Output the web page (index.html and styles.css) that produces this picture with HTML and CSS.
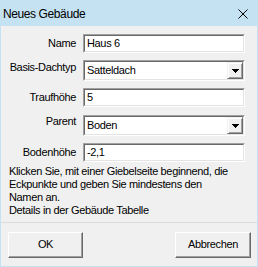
FILE: index.html
```html
<!DOCTYPE html>
<html lang="de">
<head>
<meta charset="utf-8">
<title>Neues Gebäude</title>
<link rel="stylesheet" href="styles.css">
</head>
<body>
<div class="window">
  <div class="titlebar">
    <span class="title">Neues Gebäude</span>
    <svg class="close" width="10" height="10" viewBox="0 0 10 10" aria-hidden="true">
      <path d="M0.5 0.5 L9.5 9.5 M9.5 0.5 L0.5 9.5" stroke="#000" stroke-width="1" fill="none"/>
    </svg>
  </div>
  <div class="content">
    <div class="form">
      <span class="lbl">Name</span>
      <div class="edit"><div class="inner">Haus 6</div></div>

      <span class="lbl lbl-combo">Basis-Dachtyp</span>
      <div class="combo"><div class="inner"><span class="val">Satteldach</span><span class="dd"><svg width="7" height="4" viewBox="0 0 7 4"><path d="M0 0h7v1H0z M1 1h5v1H1z M2 2h3v1H2z M3 3h1v1H3z" fill="#000"/></svg></span></div></div>

      <span class="lbl">Traufhöhe</span>
      <div class="edit"><div class="inner">5</div></div>

      <span class="lbl lbl-combo">Parent</span>
      <div class="combo combo-parent"><div class="inner"><span class="val">Boden</span><span class="dd"><svg width="7" height="4" viewBox="0 0 7 4"><path d="M0 0h7v1H0z M1 1h5v1H1z M2 2h3v1H2z M3 3h1v1H3z" fill="#000"/></svg></span></div></div>

      <span class="lbl">Bodenhöhe</span>
      <div class="edit"><div class="inner">-2,1</div></div>
    </div>
    <p class="hint">Klicken Sie, mit einer Giebelseite beginnend, die<br>Eckpunkte und geben Sie mindestens den<br>Namen an.<br>Details in der Gebäude Tabelle</p>
  </div>
  <div class="buttons">
    <button class="btn btn-ok">OK</button>
    <button class="btn btn-cancel">Abbrechen</button>
  </div>
</div>
</body>
</html>
```
FILE: styles.css
```css
html, body {
  margin: 0;
  padding: 0;
  background: #f0f0f0;
}

.window {
  box-sizing: border-box;
  width: 258px;
  height: 267px;
  border: 1px solid #c4e2f1;
  border-top: 0;
  background: #f0f0f0;
  display: flex;
  flex-direction: column;
  font-family: "Liberation Sans", Arial, sans-serif;
  font-size: 11px;
  color: #000;
}

.titlebar {
  height: 26px;
  flex: none;
  background: #c4e2f1;
  display: flex;
  align-items: center;
  justify-content: space-between;
  padding: 0 10px 0 3px;
  margin: 0 -1px;
}

.title {
  font-size: 12px;
  letter-spacing: -0.4px;
  line-height: 26px;
  padding-top: 1px;
}

.close {
  display: block;
  margin-top: 2px;
}

.content {
  flex: 1;
}

.form {
  display: grid;
  grid-template-columns: 68px 162px;
  column-gap: 7px;
  row-gap: 7px;
  padding: 8px 0 0 7px;
}

.lbl {
  text-align: right;
  line-height: 13px;
  letter-spacing: -0.35px;
  align-self: center;
  white-space: nowrap;
}

.lbl-combo {
  align-self: start;
  padding-top: 1px;
}

.edit,
.combo {
  box-sizing: border-box;
  border: 1px solid;
  border-color: #a0a0a0 #ffffff #ffffff #a0a0a0;
  background: #fff;
}

.edit {
  height: 19px;
}

.combo {
  height: 21px;
}

.combo-parent {
  margin-top: 1px;
}

.inner {
  box-sizing: border-box;
  height: 100%;
  border: 1px solid;
  border-color: #696969 #e3e3e3 #e3e3e3 #696969;
  padding-left: 2px;
  line-height: 15px;
  letter-spacing: -0.35px;
  white-space: nowrap;
}

.combo .inner {
  display: flex;
  align-items: center;
  justify-content: space-between;
  padding-left: 2px;
}

.dd {
  box-sizing: border-box;
  width: 16px;
  height: 17px;
  background: #f0f0f0;
  border: 1px solid;
  border-color: #f0f0f0 #696969 #696969 #f0f0f0;
  box-shadow: inset 1px 1px #ffffff, inset -1px -1px #a0a0a0;
  display: flex;
  align-items: center;
  justify-content: center;
}

.dd svg {
  display: block;
  shape-rendering: crispEdges;
}

.hint {
  margin: 3px 0 0 8px;
  line-height: 13px;
  letter-spacing: -0.35px;
  white-space: nowrap;
}

.buttons {
  flex: none;
  height: 44px;
  box-sizing: border-box;
  border-top: 1px solid #dcdcdc;
  display: flex;
  justify-content: space-between;
  align-items: flex-start;
  padding: 9px 6px 0 7px;
}

.btn {
  box-sizing: border-box;
  height: 26px;
  margin: 0;
  padding: 0 0 3px;
  background: #f0f0f0;
  border: 1px solid;
  border-color: #ffffff #696969 #696969 #ffffff;
  box-shadow: inset -1px -1px #a0a0a0;
  font-family: "Liberation Sans", Arial, sans-serif;
  font-size: 11px;
  letter-spacing: -0.35px;
  color: #000;
  line-height: 20px;
}

.btn-ok {
  width: 75px;
}

.btn-cancel {
  width: 76px;
}
```
